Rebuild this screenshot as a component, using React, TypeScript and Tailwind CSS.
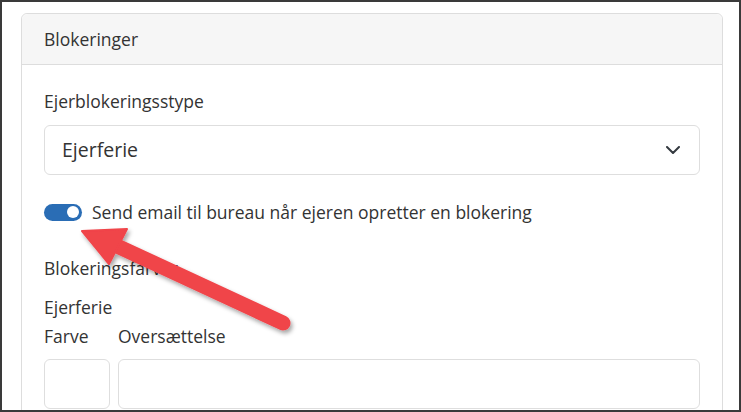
export default function App() {
  return (
    <div className="relative w-[741px] h-[412px] overflow-hidden bg-white border-2 border-[#3a3a3a] font-['Open_Sans','Noto_Sans',sans-serif] text-[#333]">
      <div className="pl-[19px] pt-[11px]">
        {/* Blokeringer card */}
        <div className="w-[702px] h-[420px] rounded-[6px] border border-[#dddddd] bg-white">
          <div className="h-[51px] flex items-center px-[22px] bg-[#f6f6f6] border-b border-[#dddddd] rounded-t-[6px] text-[17.5px]">
            Blokeringer
          </div>

          <div className="px-[22px] pt-[24px]">
            <div className="text-[17.5px] leading-[24px]">Ejerblokeringsstype</div>

            <div className="mt-[12px] h-[50px] flex items-center justify-between pl-[17px] pr-[19px] rounded-[6px] border border-[#dedede]">
              <span className="text-[19.5px]">Ejerferie</span>
              <svg width="14" height="8" viewBox="0 0 14 8" fill="none">
                <path d="M1 1l6 6 6-6" stroke="#343a40" strokeWidth="2" strokeLinecap="round" strokeLinejoin="round" />
              </svg>
            </div>

            <div className="mt-[25px] flex items-center gap-[10px] leading-[24px]">
              <div className="w-[38px] h-[17px] rounded-full bg-[#2a6db5] flex items-center justify-end pr-[3px]">
                <div className="w-[12px] h-[12px] rounded-full bg-white" />
              </div>
              <span className="text-[17.5px]">Send email til bureau når ejeren opretter en blokering</span>
            </div>

            <div className="mt-[32px] text-[17.5px] leading-[24px]">Blokeringsfarver</div>
            <div className="mt-[15px] text-[17.5px] leading-[24px]">Ejerferie</div>

            <div className="mt-[5px] flex gap-[8px] text-[17.5px] leading-[24px]">
              <div className="w-[66px]">Farve</div>
              <div className="flex-1">Oversættelse</div>
            </div>

            <div className="mt-[11px] flex gap-[8px]">
              <div className="w-[66px] h-[50px] rounded-[6px] border border-[#dedede]" />
              <div className="flex-1 h-[50px] rounded-[6px] border border-[#dedede]" />
            </div>
          </div>
        </div>
      </div>

      {/* red annotation arrow */}
      <svg className="absolute left-0 top-0" width="741" height="412" viewBox="0 0 741 412">
        <defs>
          <filter id="shadow" x="-20%" y="-20%" width="140%" height="140%">
            <feDropShadow dx="2" dy="3" stdDeviation="2" floodColor="#000" floodOpacity="0.35" />
          </filter>
        </defs>
        <g filter="url(#shadow)" transform="translate(-2 -2)">
          <line x1="117" y1="246" x2="283" y2="323" stroke="#f0444a" strokeWidth="15" strokeLinecap="round" />
          <polygon points="82,231 127,229 109,264" fill="#f0444a" stroke="#f0444a" strokeWidth="2" strokeLinejoin="round" />
        </g>
      </svg>
    </div>
  );
}
